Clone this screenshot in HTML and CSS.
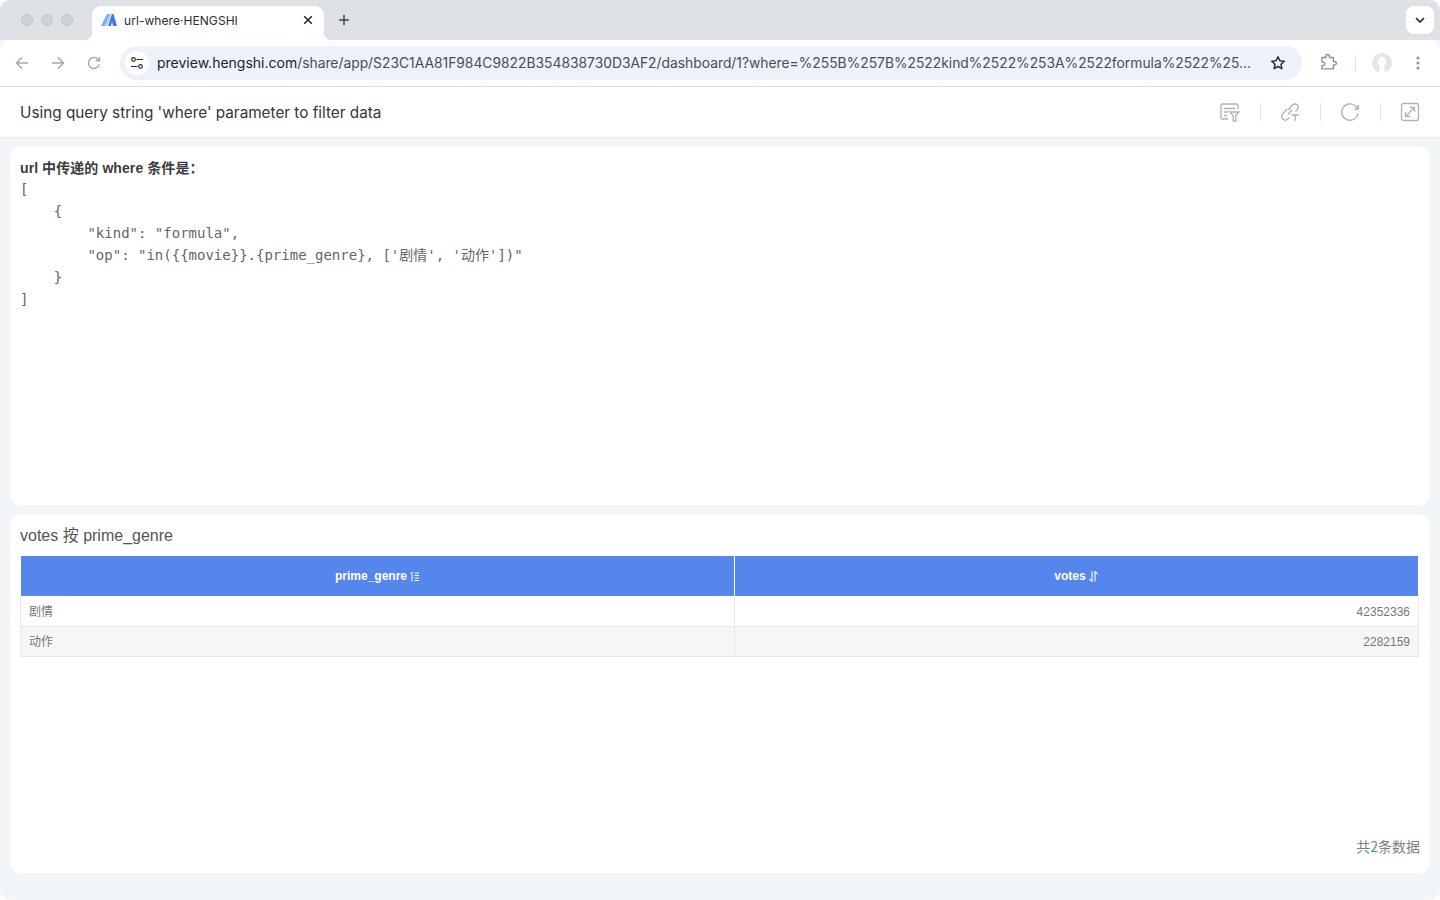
FILE: index.html
```html
<!DOCTYPE html>
<html lang="zh">
<head>
<meta charset="utf-8">
<title>url-where·HENGSHI</title>
<link rel="stylesheet" href="styles.css">
</head>
<body>
<div class="window">
  <div class="tabstrip">
    <div class="lights"><span class="light"></span><span class="light"></span><span class="light"></span></div>
    <div class="tab">
      <svg class="favicon" width="16" height="12" viewBox="0 0 16 12"><path d="M0 12 6 0h3L3.500 12z" fill="#6fb0f3"/><path d="M3.500 12 9 0h1.800L6 12z" fill="#a9d0f8"/><path d="M7 12 11 0h1.500L16 12h-4l-1-4-1 4z" fill="#4678e8"/></svg>
      <span class="tab-title">url-where·HENGSHI</span>
      <svg class="tab-close" width="10" height="10" viewBox="0 0 10 10"><path d="M1.200 1.200l7.600 7.600M8.800 1.200 1.200 8.800" stroke="#22252a" stroke-width="1.500"/></svg>
    </div>
    <svg class="newtab" width="12" height="12" viewBox="0 0 12 12"><path d="M6 1v10M1 6h10" stroke="#45484d" stroke-width="1.500"/></svg>
    <div class="tabmenu"><svg width="10" height="6" viewBox="0 0 10 6"><path d="M1 1l4 4 4-4" fill="none" stroke="#1f2125" stroke-width="1.600"/></svg></div>
  </div>
  <div class="toolbar">
    <svg class="nav" width="14" height="14" viewBox="0 0 14 14"><path d="M13 7H2M7 1.500 1.500 7 7 12.500" fill="none" stroke="#a4a6a9" stroke-width="1.400"/></svg>
    <svg class="nav" width="14" height="14" viewBox="0 0 14 14"><path d="M1 7h11M7 1.500 12.500 7 7 12.500" fill="none" stroke="#a4a6a9" stroke-width="1.400"/></svg>
    <svg class="nav" width="14" height="14" viewBox="0 0 14 14"><path d="M12.300 8.500A5.500 5.500 0 1 1 11.200 3.300L12.500 4.700M12.500 1v3.700H8.800" fill="none" stroke="#a4a6a9" stroke-width="1.400"/></svg>
    <div class="omnibox">
      <div class="site-icon"><svg width="14" height="12" viewBox="0 0 14 12"><circle cx="3.500" cy="2.500" r="1.800" fill="none" stroke="#2d2f33" stroke-width="1.200"/><path d="M6.500 2.500H13M1 9.500h6.500" stroke="#2d2f33" stroke-width="1.200"/><circle cx="10.500" cy="9.500" r="1.800" fill="none" stroke="#2d2f33" stroke-width="1.200"/></svg></div>
      <div class="url"><span class="host">preview.hengshi.com</span>/share/app/S23C1AA81F984C9822B354838730D3AF2/dashboard/1?where=%255B%257B%2522kind%2522%253A%2522formula%2522%25...</div>
      <svg class="star" width="16" height="16" viewBox="0 0 16 16"><path d="M8 1.800l1.900 4 4.400.5-3.300 3 .9 4.400L8 11.500l-3.900 2.200.9-4.400-3.300-3 4.400-.5z" fill="none" stroke="#2b2d31" stroke-width="1.500" stroke-linejoin="round"/></svg>
    </div>
    <svg class="ext" width="18" height="18" viewBox="0 0 18 18"><path d="M2 4.500h4V3.200a1.700 1.700 0 0 1 3.400 0v1.300h4v4h1.300a1.700 1.700 0 0 1 0 3.400h-1.300v4H2v-3.400h1.200a1.700 1.700 0 0 0 0-3.400H2z" fill="none" stroke="#8f9194" stroke-width="1.400" transform="translate(0 -1)"/></svg>
    <span class="sep"></span>
    <span class="avatar"><svg width="20" height="20" viewBox="0 0 20 20"><circle cx="10" cy="10" r="10" fill="#e4e5e7"/><ellipse cx="10" cy="9" rx="4" ry="5" fill="#fff"/><path d="M8 13h4l1 7H7z" fill="#fff"/></svg></span>
    <svg class="dots" width="4" height="14" viewBox="0 0 4 14"><circle cx="2" cy="2" r="1.500" fill="#8f9194"/><circle cx="2" cy="7" r="1.500" fill="#8f9194"/><circle cx="2" cy="12" r="1.500" fill="#8f9194"/></svg>
  </div>
  <header class="apphead">
    <h1 class="apptitle">Using query string 'where' parameter to filter data</h1>
    <div class="actions">
      <svg class="act" width="20" height="20" viewBox="0 0 20 20"><g fill="none" stroke="#b0b2b5" stroke-width="1.300"><path d="M8 17H2.500A1.500 1.500 0 0 1 1 15.500v-12A1.500 1.500 0 0 1 2.500 2h14A1.500 1.500 0 0 1 18 3.500V7M4 6.500h11M4 10h4M4 13.500h3"/><path d="M10 10h9l-3.200 3.500V19h-2.600v-5.500z"/></g></svg>
      <span class="act-sep"></span>
      <svg class="act" width="20" height="20" viewBox="0 0 20 20"><g fill="none" stroke="#b0b2b5" stroke-width="1.300"><path d="M8 8l4.500-5a3.300 3.300 0 0 1 4.700 0 3.300 3.300 0 0 1 0 4.700L15.500 9.500M7 7l-4.200 4.800a3.500 3.500 0 0 0 0 5.200 3.500 3.500 0 0 0 5.200 0l1.500-1.500M8 12.500l4-4.500"/><path d="M11.500 13h7.500M15.200 13v6"/></g></svg>
      <span class="act-sep"></span>
      <svg class="act" width="20" height="20" viewBox="0 0 20 20"><path d="M18 11.500A8.200 8.200 0 1 1 16 4.500L18 7M18.300 3v4h-4" fill="none" stroke="#b0b2b5" stroke-width="1.300"/></svg>
      <span class="act-sep"></span>
      <svg class="act" width="20" height="20" viewBox="0 0 20 20"><g fill="none" stroke="#b0b2b5" stroke-width="1.300"><rect x="1.500" y="1.500" width="17" height="17" rx="2"/><path d="M5.500 14.500l9-9M10 5.500h4.500V10M5.500 10v4.500H10"/></g></svg>
    </div>
  </header>
  <main class="content">
    <section class="card text-card">
      <div class="rich-title">url 中传递的 where 条件是：</div>
      <pre class="code">[
    {
        "kind": "formula",
        "op": "in({{movie}}.{prime_genre}, ['剧情', '动作'])"
    }
]</pre>
    </section>
    <section class="card table-card">
      <div class="chart-title">votes 按 prime_genre</div>
      <div class="table">
        <div class="row head">
          <div class="cell first">prime_genre<svg class="sort" width="11" height="11" viewBox="0 0 11 11"><path d="M3 10.500V1L1 3M5.500 2H10M5.500 4.500H10M5.500 7H10M5.500 9.500H10" fill="none" stroke="#fff" stroke-width="1"/></svg></div>
          <div class="cell">votes<svg class="sort" width="11" height="11" viewBox="0 0 11 11"><path d="M4 .5v10L1.500 8M7 10.500V.5L9.500 3" fill="none" stroke="#fff" stroke-width="1.100"/></svg></div>
        </div>
        <div class="row">
          <div class="cell first">剧情</div>
          <div class="cell num">42352336</div>
        </div>
        <div class="row alt">
          <div class="cell first">动作</div>
          <div class="cell num">2282159</div>
        </div>
      </div>
      <div class="pager">共<span class="count">2</span>条数据</div>
    </section>
  </main>
</div>
</body>
</html>
```
FILE: styles.css
```css
* { box-sizing: border-box; }
html, body { margin: 0; height: 100%; }
body { background: #fff; overflow: hidden; font-family: Inter, "Noto Sans CJK SC", sans-serif; }
.window { width: 1440px; height: 900px; display: flex; flex-direction: column; background: #f3f6f9; border-radius: 10px; overflow: hidden; }

.tabstrip { height: 40px; background: #dee1e6; display: flex; align-items: flex-start; flex: none; position: relative; }
.lights { display: flex; gap: 8px; padding: 14px 0 0 21px; width: 92px; }
.light { width: 12px; height: 12px; border-radius: 50%; background: #cfd1d5; border: 1px solid #c5c7cb; }
.tab { margin-top: 6px; width: 232px; height: 34px; background: #fff; border-radius: 9px 9px 0 0; display: flex; align-items: center; padding: 0 11px 6px 9px; position: relative; }
.tab::before, .tab::after { content: ""; position: absolute; bottom: 0; width: 8px; height: 8px; }
.tab::before { left: -8px; background: radial-gradient(circle at 0 0, transparent 8px, #fff 8.5px); }
.tab::after { right: -8px; background: radial-gradient(circle at 100% 0, transparent 8px, #fff 8.5px); }
.favicon { flex: none; margin-right: 7px; }
.tab-title { flex: 1; font-size: 12px; letter-spacing: .06px; color: #2b2d31; white-space: nowrap; }
.tab-close { flex: none; }
.newtab { margin: 14px 0 0 14px; }
.tabmenu { position: absolute; right: 6px; top: 6px; width: 28px; height: 28px; background: #fff; border-radius: 8px; display: flex; align-items: center; justify-content: center; }

.toolbar { height: 47px; background: #fff; border-bottom: 1px solid #dfe1e4; border-radius: 10px 10px 0 0; display: flex; align-items: center; padding: 0 0 1px 15px; flex: none; }
.nav { flex: none; margin-right: 22px; }
.nav:nth-child(3) { margin-right: 19px; }
.omnibox { width: 1182px; height: 34px; background: #edf2fa; border-radius: 17px; display: flex; align-items: center; padding: 0 16px 0 5px; flex: none; }
.site-icon { width: 24px; height: 24px; background: #fff; border-radius: 50%; display: flex; align-items: center; justify-content: center; flex: none; }
.url { flex: 1; margin: 0 8px; font-size: 13.84px; color: #4a4d52; white-space: nowrap; overflow: hidden; }
.host { font-size: 14px; color: #1f2125; }
.star { flex: none; }
.ext { flex: none; margin-left: 18px; }
.sep { width: 1px; height: 16px; background: #d3e0f6; margin: 0 16px 0 17px; flex: none; }
.avatar { width: 20px; height: 20px; flex: none; }
.avatar svg { display: block; }
.dots { margin-left: 24px; flex: none; }

.apphead { height: 51px; background: #fff; border-bottom: 1px solid #eceef1; display: flex; align-items: center; justify-content: space-between; padding: 0 20px; flex: none; }
.apptitle { margin: 0; font-size: 15.3px; font-weight: 400; color: #33363a; }
.actions { display: flex; align-items: center; }
.act { flex: none; display: block; }
.act-sep { width: 1px; height: 18px; background: #dcdee1; margin: 0 19px 0 20px; }

.content { flex: 1; padding: 9px 10px 27px; display: flex; flex-direction: column; gap: 10px; min-height: 0; }
.card { flex: 1; background: #fff; border-radius: 10px; padding: 10px; min-height: 0; position: relative; }
.rich-title { font: 700 14px/20px "Liberation Sans", "Noto Sans CJK SC", sans-serif; letter-spacing: .08px; color: #3a3d41; padding-top: 1px; }
.code { margin: 0; font: 14px/22px "DejaVu Sans Mono", "Noto Sans CJK SC", monospace; color: #666; }

.chart-title { font: 16px/20px "Liberation Sans", "Noto Sans CJK SC", sans-serif; color: #555; padding-top: 1px; margin-bottom: 10px; }
.table { margin-right: 1px; font: 12px "Liberation Sans", "Noto Sans CJK SC", sans-serif; color: #777; }
.row { display: grid; grid-template-columns: 714px 1fr; height: 30px; border-bottom: 1px solid #e8e8e8; border-left: 1px solid #e8e8e8; border-right: 1px solid #e8e8e8; }
.row.alt { background: #f6f6f6; }
.row.head { height: 41px; background: #5586ec; color: #fff; font-weight: 700; border: 0; border-bottom: 1px solid #fff; margin: 0 1px; }
.cell { display: flex; align-items: center; padding: 0 8px; }
.cell.first { border-right: 1px solid #e8e8e8; padding-bottom: 2px; }
.cell.num { justify-content: flex-end; }
.head .cell { justify-content: center; padding-bottom: 0; }
.head .cell.first { border-right: 1px solid #fff; padding-bottom: 0; }
.sort { margin-left: 2px; }
.pager { position: absolute; right: 10px; bottom: 18px; font: 14px/18px "Noto Sans CJK SC", sans-serif; color: #808080; }
.count { color: #4d86f0; }
```
